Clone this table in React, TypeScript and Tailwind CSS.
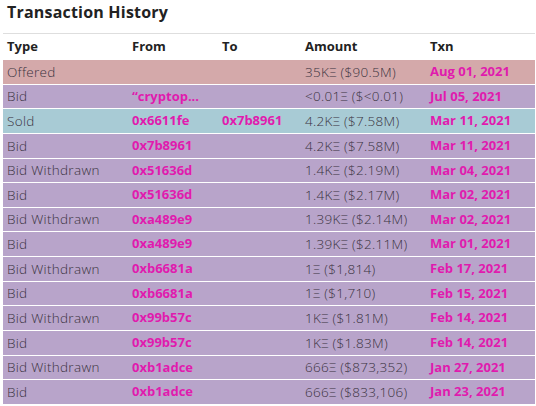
import React from "react";

type Row = {
  type: string;
  from: string;
  to: string;
  amount: string;
  date: string;
  tone: "offer" | "bid" | "sold";
};

const rows: Row[] = [
  { type: "Offered", from: "", to: "", amount: "35KΞ ($90.5M)", date: "Aug 01, 2021", tone: "offer" },
  { type: "Bid", from: "“cryptop...", to: "", amount: "<0.01Ξ ($<0.01)", date: "Jul 05, 2021", tone: "bid" },
  { type: "Sold", from: "0x6611fe", to: "0x7b8961", amount: "4.2KΞ ($7.58M)", date: "Mar 11, 2021", tone: "sold" },
  { type: "Bid", from: "0x7b8961", to: "", amount: "4.2KΞ ($7.58M)", date: "Mar 11, 2021", tone: "bid" },
  { type: "Bid Withdrawn", from: "0x51636d", to: "", amount: "1.4KΞ ($2.19M)", date: "Mar 04, 2021", tone: "bid" },
  { type: "Bid", from: "0x51636d", to: "", amount: "1.4KΞ ($2.17M)", date: "Mar 02, 2021", tone: "bid" },
  { type: "Bid Withdrawn", from: "0xa489e9", to: "", amount: "1.39KΞ ($2.14M)", date: "Mar 02, 2021", tone: "bid" },
  { type: "Bid", from: "0xa489e9", to: "", amount: "1.39KΞ ($2.11M)", date: "Mar 01, 2021", tone: "bid" },
  { type: "Bid Withdrawn", from: "0xb6681a", to: "", amount: "1Ξ ($1,814)", date: "Feb 17, 2021", tone: "bid" },
  { type: "Bid", from: "0xb6681a", to: "", amount: "1Ξ ($1,710)", date: "Feb 15, 2021", tone: "bid" },
  { type: "Bid Withdrawn", from: "0x99b57c", to: "", amount: "1KΞ ($1.81M)", date: "Feb 14, 2021", tone: "bid" },
  { type: "Bid", from: "0x99b57c", to: "", amount: "1KΞ ($1.83M)", date: "Feb 14, 2021", tone: "bid" },
  { type: "Bid Withdrawn", from: "0xb1adce", to: "", amount: "666Ξ ($873,352)", date: "Jan 27, 2021", tone: "bid" },
  { type: "Bid", from: "0xb1adce", to: "", amount: "666Ξ ($833,106)", date: "Jan 23, 2021", tone: "bid" },
];

const toneBg = {
  offer: "bg-[#d4a9aa]",
  bid: "bg-[#b8a4ca]",
  sold: "bg-[#a8cbd5]",
};

export default function App() {
  return (
    <div className="w-[536px] h-[406px] overflow-hidden bg-white font-['Open_Sans',sans-serif]">
      <h2 className="h-[26px] pl-[7px] pt-[1px] text-[16px] font-bold leading-[22px] tracking-[0.2px] text-[#222]">
        Transaction History
      </h2>
      <div className="ml-[3px] mr-[1px] mt-[7px] border-t border-[#dedede]">
        <div className="grid grid-cols-[125px_90px_83px_125px_1fr] h-[25px] items-center px-[4px] text-[13px] font-bold text-[#222]">
          <div>Type</div>
          <div>From</div>
          <div>To</div>
          <div>Amount</div>
          <div>Txn</div>
        </div>
        {rows.map((r, i) => (
          <div
            key={i}
            className={`grid grid-cols-[125px_90px_83px_125px_1fr] h-[24.64px] items-center px-[4px] border-t border-white text-[13px] ${toneBg[r.tone]}`}
          >
            <div className="text-[13.5px] font-light tracking-[0.3px] text-[#3a3340]">{r.type}</div>
            <div className="font-bold text-[#e01bae]">{r.from}</div>
            <div className="font-bold text-[#e01bae]">{r.to}</div>
            <div className="text-[13.5px] font-light tracking-[0.3px] text-[#3a3340]">{r.amount}</div>
            <div className="font-bold text-[#e01bae]">{r.date}</div>
          </div>
        ))}
      </div>
    </div>
  );
}
